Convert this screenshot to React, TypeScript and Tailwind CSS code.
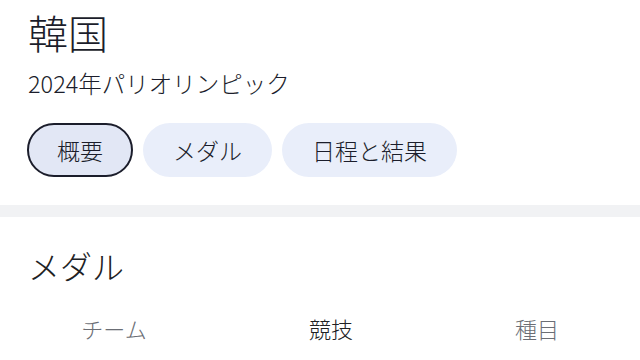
import React, { useState } from 'react';

const tabs = ['概要', 'メダル', '日程と結果'];

function App() {
  const [activeTab, setActiveTab] = useState(0);

  return (
    <div
      className="w-[640px] h-[360px] overflow-hidden bg-white text-[#1b1d2b] font-light"
      style={{ fontFamily: '"Noto Sans CJK JP", "Noto Sans", sans-serif' }}
    >
      {/* Header */}
      <div className="px-[28px] pt-[8px]">
        <h1 className="text-[40px] leading-[48px]">韓国</h1>
        <div className="mt-[12px] text-[23.5px] leading-[30px]">2024年パリオリンピック</div>

        {/* Tabs */}
        <div className="mt-[25px] flex gap-[10px] -ml-[1px]">
          {tabs.map((tab, i) => (
            <button
              key={tab}
              onClick={() => setActiveTab(i)}
              className={`h-[54px] rounded-full border-2 px-[28px] text-[23px] leading-none ${
                activeTab === i ? 'border-[#1b1d2b] bg-[#e2e7f5]' : 'border-transparent bg-[#e9eefa]'
              }`}
            >
              {tab}
            </button>
          ))}
        </div>
      </div>

      {/* Divider band */}
      <div className="mt-[28px] h-[12px] bg-[#f1f2f4]" />

      {/* Medals */}
      <div className="pt-[28px]">
        <h2 className="px-[28px] text-[32px] leading-[40px] text-[#202124]">メダル</h2>
        <div className="mt-[28px] grid grid-cols-[228px_206px_206px] text-[22px] leading-[30px]">
          <div className="text-center text-[#6b6e75]">チーム</div>
          <div className="text-center text-[#202124]">競技</div>
          <div className="text-center text-[#6b6e75]">種目</div>
        </div>
      </div>
    </div>
  );
}

export default App;
